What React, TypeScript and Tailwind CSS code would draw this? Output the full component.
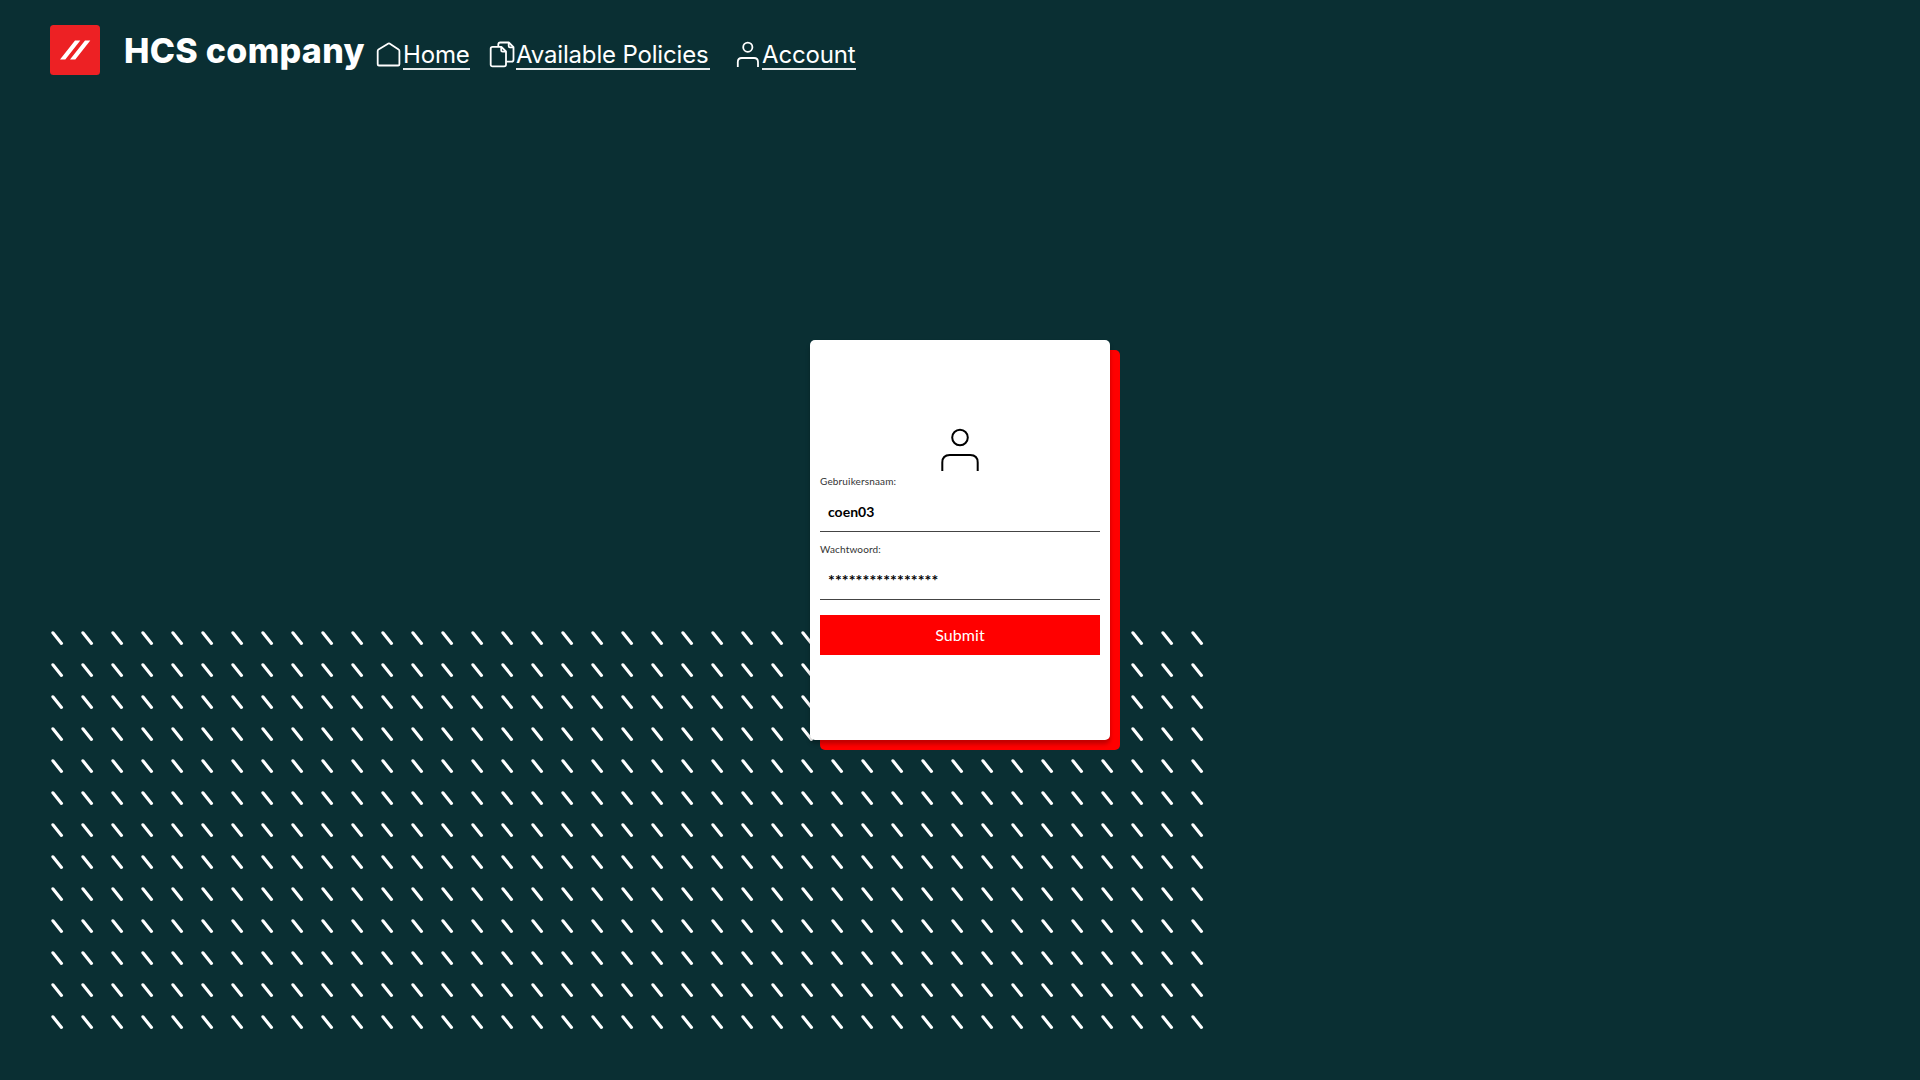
import type { ReactNode } from "react";

const COLUMNS = 39;
const ROWS = 13;

function DashPattern() {
  const dashes: string[] = [];
  for (let r = 0; r < ROWS; r++) {
    for (let c = 0; c < COLUMNS; c++) {
      dashes.push(`M${2.9 + c * 30} ${2.8 + r * 32}l8.600 10.600`);
    }
  }
  return (
    <svg className="absolute bottom-[46px] left-[50px]" width="1160" height="404" viewBox="0 0 1160 404" fill="none">
      <path d={dashes.join("")} stroke="#fff" strokeWidth="3.100" strokeLinecap="round" />
    </svg>
  );
}

function Logo() {
  return (
    <div className="flex items-center">
      <svg width="50" height="50" viewBox="0 0 50 50">
        <rect width="50" height="50" rx="3.5" fill="#ed2124" />
        <path d="M10 34.5 25 15.5h5.3l-15 19zM20 34.5l15-19h5.3l-15 19z" fill="#fff" />
      </svg>
      <span className="ml-[24px] w-[243px] whitespace-nowrap pt-[2px] font-['Inter'] text-[34px] font-extrabold leading-[50px] tracking-[0.3px]">
        HCS company
      </span>
    </div>
  );
}

function HomeIcon() {
  return (
    <svg width="28" height="28" viewBox="0 0 28 28" fill="none" stroke="#fff" strokeWidth="1.8" strokeLinejoin="round">
      <path d="M2.700 10c0-.6.3-1.100.8-1.400L13.400 2.500c.4-.2.8-.2 1.100 0L23.600 8.600c.5.3.8.8.8 1.400V23.200c0 .8-.5 1.300-1.300 1.300H4c-.8 0-1.300-.5-1.300-1.300z" />
    </svg>
  );
}

function PoliciesIcon() {
  return (
    <svg width="28" height="28" viewBox="0 0 28 28" fill="none" stroke="#fff" strokeWidth="1.8" strokeLinejoin="round">
      <path d="M4.600 5.800h8.800l4.600 4.700V23.500c0 1.200-.7 1.900-1.900 1.900H4.600c-1.200 0-1.900-.7-1.900-1.900V7.700c0-1.200.7-1.900 1.900-1.900z" />
      <path d="M13.200 6v3.300c0 .9.500 1.400 1.400 1.400h3.200" />
      <path d="M10.300 5.600V3.400c0-1.200.7-1.900 1.900-1.900h8.600l4.700 4.700v12.500c0 1.200-.7 1.900-1.900 1.900h-5.300" />
      <path d="M20.700 1.700V5c0 .9.5 1.400 1.400 1.400h3.200" />
    </svg>
  );
}

function UserIcon() {
  return (
    <svg width="28" height="28" viewBox="0 0 28 28" fill="none" stroke="#fff" strokeWidth="1.8">
      <circle cx="13.800" cy="6.200" r="4.600" />
      <path d="M3.800 26v-5c0-2.500 1.500-4 4-4h12.200c2.500 0 4 1.500 4 4v5" />
    </svg>
  );
}

function NavLink({ icon, label, width }: { icon: ReactNode; label: string; width: string }) {
  return (
    <a className="flex items-start" href="#">
      {icon}
      <span
        className={`${width} whitespace-nowrap border-b-2 border-white/90 text-[24px] font-normal leading-[27px] tracking-[-0.17px]`}
      >
        {label}
      </span>
    </a>
  );
}

function Field({ label, children }: { label: string; children: ReactNode }) {
  return (
    <div className="flex h-[68px] flex-col border-b border-[#444]">
      <span className="pt-[9px] text-[10px] leading-4 tracking-[0.15px] text-[#333]">{label}</span>
      <div className="flex flex-1 items-center pl-2 pt-1">{children}</div>
    </div>
  );
}

function LoginCard() {
  return (
    <div className="relative h-[400px] w-[300px]">
      <div className="absolute left-[10px] top-[10px] h-[400px] w-[300px] rounded-[5px] bg-[#ff0000]" />
      <form className="relative flex h-full flex-col rounded-[5px] bg-white px-[10px] pt-[85px] font-['Lato'] shadow-[0_4px_4px_rgba(0,0,0,0.25)]">
        <svg className="mx-auto" width="50" height="46" viewBox="0 0 50 46" fill="none" stroke="#000" strokeWidth="2">
          <circle cx="25" cy="12.500" r="7.800" />
          <path d="M7.300 46V37.500c0-5 3-7.500 7.500-7.500h20.400c4.500 0 7.500 2.500 7.500 7.500V46" />
        </svg>
        <div className="-mt-[7px]">
          <Field label="Gebruikersnaam:">
            <span className="text-[14px] font-bold leading-4 text-black">coen03</span>
          </Field>
          <Field label="Wachtwoord:">
            <span className="text-[16px] font-bold leading-4 tracking-[0.1px] text-black">****************</span>
          </Field>
        </div>
        <button type="button" className="mt-[15px] h-10 bg-[#ff0000] text-[16px] tracking-[0.1px] text-white">
          Submit
        </button>
      </form>
    </div>
  );
}

export default function App() {
  return (
    <div className="relative flex h-[1080px] w-[1920px] flex-col overflow-hidden bg-[#0a2f33] font-['Inter'] text-white">
      <DashPattern />
      <header className="flex h-[100px] items-center pl-[50px]">
        <Logo />
        <nav className="flex items-start pl-[8px] pt-[11px]">
          <NavLink icon={<HomeIcon />} label="Home" width="w-[67px]" />
          <div className="pl-[18px]">
            <NavLink icon={<PoliciesIcon />} label="Available Policies" width="w-[194px]" />
          </div>
          <div className="pl-[24px]">
            <NavLink icon={<UserIcon />} label="Account" width="w-[94px]" />
          </div>
        </nav>
      </header>
      <main className="flex justify-center pt-[240px]">
        <LoginCard />
      </main>
    </div>
  );
}
